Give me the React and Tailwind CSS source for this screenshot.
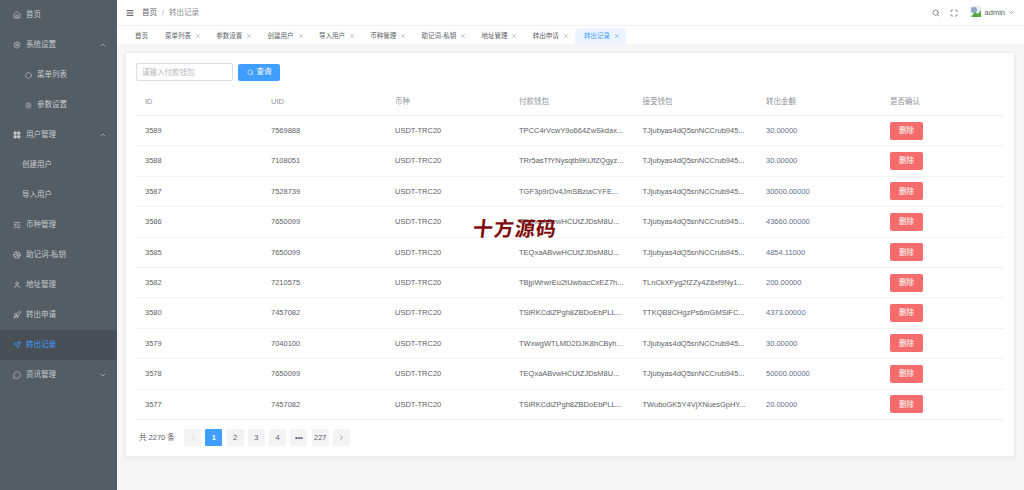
import { Home, Settings, Circle, LayoutGrid, ChevronUp, ChevronDown, ChevronLeft, ChevronRight, SlidersHorizontal, Dribbble, User, Rocket, Send, MessageCircle, X, Search, Maximize, AlignJustify } from "lucide-react";

const menu = [
  { icon: Home, label: "首页" },
  { icon: Settings, label: "系统设置", arrow: "up" },
  { icon: Circle, label: "菜单列表", sub: true },
  { icon: Settings, label: "参数设置", sub: true },
  { icon: LayoutGrid, label: "用户管理", arrow: "up", fill: true },
  { label: "创建用户", plain: true },
  { label: "导入用户", plain: true },
  { icon: SlidersHorizontal, label: "币种管理" },
  { icon: Dribbble, label: "助记词-私钥" },
  { icon: User, label: "地址管理" },
  { icon: Rocket, label: "转出申请" },
  { icon: Send, label: "转出记录", active: true },
  { icon: MessageCircle, label: "资讯管理", arrow: "down" },
];

const tabs = ["菜单列表", "参数设置", "创建用户", "导入用户", "币种管理", "助记词-私钥", "地址管理", "转出申请"];

const tj = "TJjubyas4dQ5snNCCrub945...";
const teq = "TEQxaABvwHCUtZJDsM8U...";
const tsi = "TSiRKCdiZPgh8ZBDoEbPLL...";

const rows = [
  ["3589", "7569888", "TPCC4rVcwY9o664ZwSkdax...", tj, "30.00000"],
  ["3588", "7108051", "TRr5asTfYNysqtb9KiJfZQgyz...", tj, "30.00000"],
  ["3587", "7528739", "TGF3p9rDv4JmSBziaCYFE...", tj, "30000.00000"],
  ["3586", "7650099", teq, tj, "43660.00000"],
  ["3585", "7650099", teq, tj, "4854.11000"],
  ["3582", "7210575", "TBjpWrwrEu2tUwbacCxEZ7h...", "TLnCkXFyg2fZZy4Z8xf9Ny1...", "200.00000"],
  ["3580", "7457082", tsi, "TTKQB8CHgzPs6mGMSiFC...", "4373.00000"],
  ["3579", "7040100", "TWxwgWTLMD2DJK8hCByh...", tj, "30.00000"],
  ["3578", "7650099", teq, tj, "50000.00000"],
  ["3577", "7457082", tsi, "TWuboGK5Y4VjXNuesGpHY...", "20.00000"],
];

const cols = "grid grid-cols-[126px_124px_124px_123.5px_123.5px_124px_1fr] items-center border-b border-[#eff1f5]";

function Avatar() {
  return (
    <svg width="11" height="13" viewBox="0 0 11 13">
      <rect width="11" height="11" fill="#e8eef3" />
      <circle cx="4" cy="4" r="3" fill="#8fa6bd" />
      <path d="M1 11 L5 6 L8 8 L11 4 V11 Z" fill="#5aa544" />
      <rect x="3" y="12" width="4" height="1" fill="#e5e5e5" />
    </svg>
  );
}

function Sidebar() {
  return (
    <aside className="w-[117px] shrink-0 h-full bg-[#545c64] text-[#c9cccf]">
      {menu.map(m => {
        const Icon = m.icon;
        return (
          <div key={m.label} className={`relative h-[30px] flex items-center ${m.active ? "bg-[#484f57] text-[#409eff]" : ""} ${m.sub ? "pl-[25px]" : m.plain ? "pl-[22px]" : "pl-[13px]"}`}>
            {Icon && <Icon size={m.sub ? 7 : 8} strokeWidth={2} fill={m.fill ? "currentColor" : "none"} className="mr-[5px] shrink-0" />}
            <span>{m.label}</span>
            {m.arrow === "up" && <ChevronUp size={8} className="absolute left-[99px]" />}
            {m.arrow === "down" && <ChevronDown size={8} className="absolute left-[99px]" />}
          </div>
        );
      })}
    </aside>
  );
}

function Header() {
  return (
    <header className="h-[26px] flex items-center border-b border-[#f0f0f0] pl-[9px] pr-[9px] bg-white">
      <AlignJustify size={8} className="text-[#303133] mr-[8px]" strokeWidth={2.5} />
      <span className="text-[#606266]">首页</span>
      <span className="mx-[5px] text-[#a8abb2]">/</span>
      <span className="text-[#8a8d93]">转出记录</span>
      <div className="ml-auto flex items-center text-[#5a5e66]">
        <Search size={8} />
        <Maximize size={8} className="ml-[10px]" />
        <span className="ml-[12px] mr-[4px] flex"><Avatar /></span>
        <span className="text-[#606266]">admin</span>
        <ChevronDown size={7} className="ml-[3px]" />
      </div>
    </header>
  );
}

function Tabs() {
  return (
    <div className="h-[18px] flex items-end bg-white pl-[8px] text-[#606266] text-[6.5px]">
      <div className="flex items-center h-[16px] pl-[10px] w-[31px]">首页</div>
      {tabs.map(t => (
        <div key={t} className="flex items-center h-[16px] pl-[9px] pr-[6.3px] gap-[4px] whitespace-nowrap">
          <span>{t}</span>
          <X size={6} className="text-[#909399]" />
        </div>
      ))}
      <div className="flex items-center h-[16px] pl-[9px] pr-[6.3px] gap-[4px] bg-[#ecf5ff] text-[#409eff] rounded-t-[5px]">
        <span>转出记录</span>
        <X size={6} />
      </div>
    </div>
  );
}

function Pagination() {
  const cell = "w-[17px] h-[17px] flex items-center justify-center rounded-[1px] bg-[#f4f4f5] text-[#606266]";
  return (
    <div className="flex items-center h-[35px] pl-[3px] text-[#606266]">
      <span className="mr-[9px] w-[36px] whitespace-nowrap">共 2270 条</span>
      <div className="flex gap-[4.3px]">
        <div className={`${cell} text-[#c0c4cc]`}><ChevronLeft size={7} /></div>
        <div className="w-[17px] h-[17px] flex items-center justify-center rounded-[1px] bg-[#409eff] text-white font-bold">1</div>
        <div className={cell}>2</div>
        <div className={cell}>3</div>
        <div className={cell}>4</div>
        <div className={`${cell} font-bold`}>•••</div>
        <div className={cell}>227</div>
        <div className={cell}><ChevronRight size={7} /></div>
      </div>
    </div>
  );
}

export default function App() {
  return (
    <div className="relative w-[1024px] h-[490px] overflow-hidden flex bg-[#f6f6f6] text-[7.5px] font-['Liberation_Sans','Noto_Sans_CJK_SC',sans-serif]">
      <Sidebar />
      <main className="flex-1 min-w-0 flex flex-col">
        <Header />
        <Tabs />
        <div className="flex-1 pt-[8px] pl-[8px] pr-[9px]">
          <section className="h-[405px] bg-white border border-[#ebeef5] rounded-[2px] shadow-[0_1px_4px_rgba(0,0,0,0.06)] pt-[10px] px-[10px]">
            <div className="flex items-center gap-[5px] h-[18px]">
              <input placeholder="请输入付款钱包" className="w-[97px] h-[18px] border border-[#dcdfe6] rounded-[2px] px-[5px] outline-none placeholder:text-[#b4b7bd]" />
              <button className="w-[42px] h-[17px] bg-[#409eff] text-white rounded-[2px] flex items-center justify-center gap-[3px]">
                <Search size={7} />
                查询
              </button>
            </div>
            <div className={`${cols} h-[27px] mt-[8px] pl-[9px] text-[#909399]`}>
              {["ID", "UID", "币种", "付款钱包", "接受钱包", "转出金额", "是否确认"].map(h => <div key={h}>{h}</div>)}
            </div>
            {rows.map(r => (
              <div key={r[0]} className={`${cols} h-[30.4px] pl-[9px] text-[#606266]`}>
                <div>{r[0]}</div>
                <div>{r[1]}</div>
                <div>USDT-TRC20</div>
                <div className="whitespace-nowrap">{r[2]}</div>
                <div className="whitespace-nowrap">{r[3]}</div>
                <div className="text-[#5f6f8a]">{r[4]}</div>
                <div>
                  <button className="w-[33px] h-[18px] bg-[#f56c6c] text-white rounded-[2px]">删除</button>
                </div>
              </div>
            ))}
            <Pagination />
          </section>
        </div>
      </main>
      <div className="absolute left-[473px] top-[216px] text-[20px] leading-[26px] tracking-[1px] font-semibold -skew-x-6 text-[#7f0a0a] whitespace-nowrap">十方源码</div>
    </div>
  );
}
